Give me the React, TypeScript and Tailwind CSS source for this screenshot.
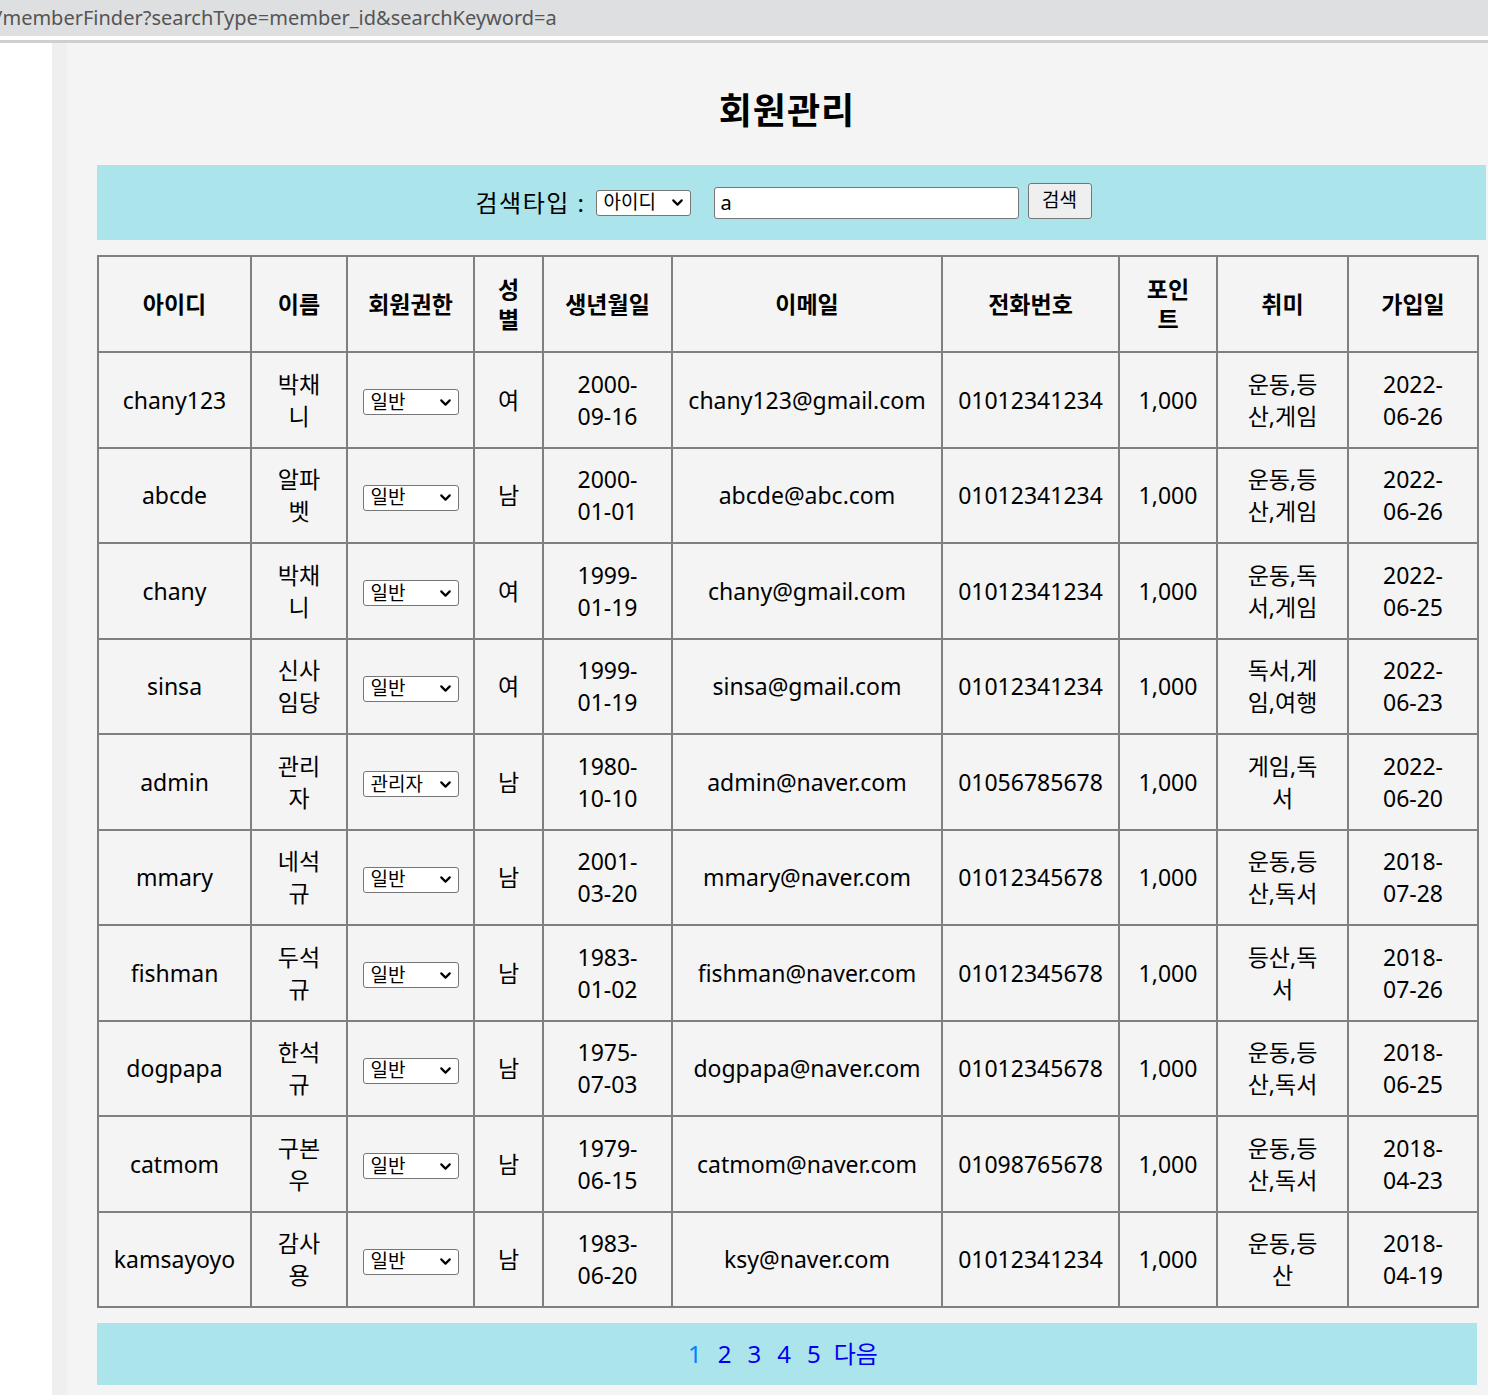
import { ChevronDown } from 'lucide-react'

const members = [
  { id: 'chany123', name: '박채니', role: '일반', gender: '여', birth: '2000-09-16', email: 'chany123@gmail.com', phone: '01012341234', point: '1,000', hobby: '운동,등산,게임', joined: '2022-06-26' },
  { id: 'abcde', name: '알파벳', role: '일반', gender: '남', birth: '2000-01-01', email: 'abcde@abc.com', phone: '01012341234', point: '1,000', hobby: '운동,등산,게임', joined: '2022-06-26' },
  { id: 'chany', name: '박채니', role: '일반', gender: '여', birth: '1999-01-19', email: 'chany@gmail.com', phone: '01012341234', point: '1,000', hobby: '운동,독서,게임', joined: '2022-06-25' },
  { id: 'sinsa', name: '신사임당', role: '일반', gender: '여', birth: '1999-01-19', email: 'sinsa@gmail.com', phone: '01012341234', point: '1,000', hobby: '독서,게임,여행', joined: '2022-06-23' },
  { id: 'admin', name: '관리자', role: '관리자', gender: '남', birth: '1980-10-10', email: 'admin@naver.com', phone: '01056785678', point: '1,000', hobby: '게임,독서', joined: '2022-06-20' },
  { id: 'mmary', name: '네석규', role: '일반', gender: '남', birth: '2001-03-20', email: 'mmary@naver.com', phone: '01012345678', point: '1,000', hobby: '운동,등산,독서', joined: '2018-07-28' },
  { id: 'fishman', name: '두석규', role: '일반', gender: '남', birth: '1983-01-02', email: 'fishman@naver.com', phone: '01012345678', point: '1,000', hobby: '등산,독서', joined: '2018-07-26' },
  { id: 'dogpapa', name: '한석규', role: '일반', gender: '남', birth: '1975-07-03', email: 'dogpapa@naver.com', phone: '01012345678', point: '1,000', hobby: '운동,등산,독서', joined: '2018-06-25' },
  { id: 'catmom', name: '구본우', role: '일반', gender: '남', birth: '1979-06-15', email: 'catmom@naver.com', phone: '01098765678', point: '1,000', hobby: '운동,등산,독서', joined: '2018-04-23' },
  { id: 'kamsayoyo', name: '감사용', role: '일반', gender: '남', birth: '1983-06-20', email: 'ksy@naver.com', phone: '01012341234', point: '1,000', hobby: '운동,등산', joined: '2018-04-19' },
]

const font = { fontFamily: '"Noto Sans", "Noto Sans CJK KR", sans-serif' }

const headers = [
  { label: '아이디', w: 'w-[153px] px-[10px]' },
  { label: '이름', w: 'w-[96px] px-[10px]' },
  { label: '회원권한', w: 'w-[127px] px-[8px]' },
  { label: '성별', w: 'w-[69px] px-[14px]' },
  { label: '생년월일', w: 'w-[129px] px-[8px]' },
  { label: '이메일', w: 'w-[270px] px-[10px]' },
  { label: '전화번호', w: 'w-[177px] px-[10px]' },
  { label: '포인트', w: 'w-[98px] px-[18px]' },
  { label: '취미', w: 'w-[131px] px-[10px]' },
  { label: '가입일', w: 'w-[130px] px-[10px]' },
]

function FakeSelect({ value, className }: { value: string; className: string }) {
  return (
    <span
      className={`inline-flex items-center justify-between bg-white border border-[#767676] rounded-[3px] pl-[7px] pr-[4px] text-[19px] leading-none text-black ${className}`}
    >
      <span>{value}</span>
      <ChevronDown size={17} strokeWidth={3} />
    </span>
  )
}

export default function App() {
  return (
    <div className="w-[1488px] h-[1395px] overflow-hidden bg-white" style={font}>
      <div className="h-[36px] bg-[#dedfe1] flex items-center overflow-hidden">
        <span className="ml-[-5px] text-[20px] text-[#555] whitespace-nowrap">/memberFinder?searchType=member_id&amp;searchKeyword=a</span>
      </div>
      <div className="h-[4px] bg-white" />
      <div className="h-[3px] bg-[#cfcfcf]" />
      <div className="flex h-[1352px]">
        <div className="w-[52px] bg-white" />
        <div className="w-[15px] bg-[#efefef]" />
        <div className="flex-1 bg-[#f4f4f4] pl-[30px]">
          <h1 className="w-[1380px] text-center text-[36px] font-bold leading-none tracking-[1px] mt-[50px] text-black">회원관리</h1>
          <div className="mt-[36px] w-[1389px] h-[75px] bg-[#ace4eb] flex items-center justify-center pr-[16px] text-[24px] text-black">
            <span className="mr-[10px] tracking-[1.5px]">검색타입 :</span>
            <FakeSelect value="아이디" className="w-[95px] h-[26px]" />
            <span className="ml-[23px] w-[305px] h-[32px] bg-white border border-[#767676] rounded-[3px] flex items-center pl-[6px] text-[20px]">a</span>
            <span className="ml-[9px] w-[64px] h-[36px] bg-[#efefef] border border-[#767676] rounded-[3px] flex items-center justify-center text-[19px] mb-[4px]">검색</span>
          </div>
          <table className="mt-[15px] w-[1380px] table-fixed border-collapse border-2 border-[#808080] text-[23px] text-black text-center">
            <thead>
              <tr className="h-[96px]">
                {headers.map((h) => (
                  <th key={h.label} className={`${h.w} border-2 border-[#808080] font-bold leading-[30px]`}>
                    {h.label}
                  </th>
                ))}
              </tr>
            </thead>
            <tbody>
              {members.map((m) => (
                <tr key={m.id} className="h-[95.5px]">
                  <td className="border-2 border-[#808080] px-[8px] leading-[32px]">{m.id}</td>
                  <td className="border-2 border-[#808080] px-[24px] leading-[32px]">{m.name}</td>
                  <td className="border-2 border-[#808080] px-[8px]">
                    <FakeSelect value={m.role} className="w-[96px] h-[26px] align-middle" />
                  </td>
                  <td className="border-2 border-[#808080] px-[8px] leading-[32px]">{m.gender}</td>
                  <td className="border-2 border-[#808080] px-[20px] leading-[32px]">{m.birth}</td>
                  <td className="border-2 border-[#808080] px-[4px] leading-[32px]">{m.email}</td>
                  <td className="border-2 border-[#808080] px-[4px] leading-[32px]">{m.phone}</td>
                  <td className="border-2 border-[#808080] px-[4px] leading-[32px]">{m.point}</td>
                  <td className="border-2 border-[#808080] px-[20px] leading-[32px]">{m.hobby}</td>
                  <td className="border-2 border-[#808080] px-[20px] leading-[32px]">{m.joined}</td>
                </tr>
              ))}
            </tbody>
          </table>
          <div className="mt-[15px] w-[1380px] h-[62px] bg-[#ace4eb] flex items-center justify-center gap-[16px] pr-[8px] text-[24px]">
            <a className="text-[#0080ff]">1</a>
            <a className="text-[#0000ee]">2</a>
            <a className="text-[#0000ee]">3</a>
            <a className="text-[#0000ee]">4</a>
            <a className="text-[#0000ee]">5</a>
            <a className="text-[#0000ee] ml-[-3px]">다음</a>
          </div>
        </div>
      </div>
    </div>
  )
}
